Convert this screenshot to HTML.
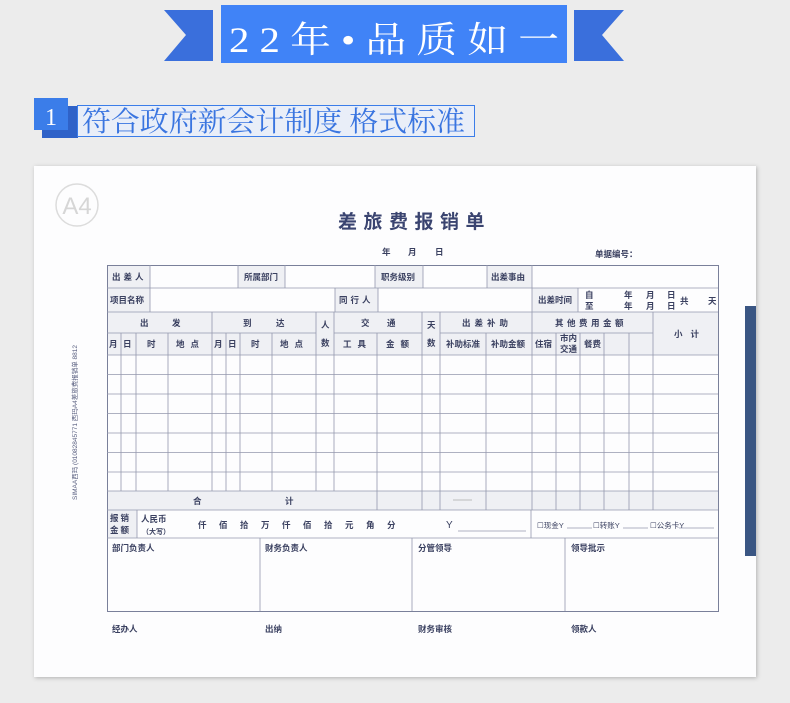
<!DOCTYPE html>
<html><head><meta charset="utf-8"><style>
html,body{margin:0;padding:0;background:#ececec;}
body{width:790px;height:703px;position:relative;overflow:hidden;font-family:"Liberation Sans","Noto Sans CJK SC",sans-serif;}
svg text{font-family:"Liberation Sans","Noto Sans CJK SC",sans-serif;}
</style></head><body>
<svg width="790" height="703" viewBox="0 0 790 703" xmlns="http://www.w3.org/2000/svg" style="position:absolute;left:0;top:0">
<defs>
<filter id="sh" x="-5%" y="-5%" width="110%" height="110%"><feDropShadow dx="1" dy="1" stdDeviation="2" flood-color="#000" flood-opacity="0.25"/></filter>
</defs>
<polygon points="164,10 213,10 213,61 164,61 186,35" fill="#3a6fdc"/>
<polygon points="624,10 574,10 574,61 624,61 602,35" fill="#3a6fdc"/>
<rect x="221" y="5" width="346" height="58" fill="#4083f7"/>
<text x="229" y="52" textLength="330" lengthAdjust="spacingAndGlyphs" fill="#fff" font-size="36" style="font-family:'Liberation Serif','Noto Serif CJK SC',serif">2 2 年 • 品 质 如 一</text>
<rect x="42" y="106" width="36" height="32" fill="#2f62c8"/>
<rect x="34" y="98" width="34" height="32" fill="#3b7de9"/>
<text x="51" y="125" text-anchor="middle" fill="#fff" font-size="24" style="font-family:'Liberation Serif',serif">1</text>
<rect x="77.5" y="105.5" width="397" height="31" fill="#e9eef8" stroke="#3b7de9" stroke-width="1"/>
<text x="82" y="131" textLength="383" lengthAdjust="spacingAndGlyphs" fill="#3a75e0" font-size="28" style="font-family:'Liberation Serif','Noto Serif CJK SC',serif">符合政府新会计制度 格式标准</text>
<rect x="34" y="166" width="722" height="511" fill="#fdfdfe" filter="url(#sh)"/>
<rect x="745" y="306" width="11" height="250" fill="#3a5683"/>
<circle cx="77" cy="205" r="21" fill="none" stroke="#dcdcdc" stroke-width="1.5"/>
<text x="77" y="214" text-anchor="middle" fill="#d6d6d6" font-size="24">A4</text>
<text x="338" y="228" letter-spacing="6.5" fill="#3a4470" font-size="19" font-weight="bold">差旅费报销单</text>
<g fill="#3a4060" font-size="8.5" font-weight="bold">
<text x="382" y="255">年</text><text x="408" y="255">月</text><text x="435" y="255">日</text>
<text x="595" y="257">单据编号：</text>
</g>
<text transform="translate(77,500) rotate(-90)" fill="#5a6080" font-size="6.5">SIMAA西玛   (01082845771   西玛A4差旅费报销单  8812</text>
<g fill="#eff0f4">
<rect x="107" y="265" width="43" height="23"/><rect x="238" y="265" width="47" height="23"/><rect x="375" y="265" width="48" height="23"/><rect x="487" y="265" width="45" height="23"/>
<rect x="107" y="288" width="43" height="24"/><rect x="335" y="288" width="43" height="24"/><rect x="532" y="288" width="46" height="24"/>
<rect x="107" y="312" width="611" height="43"/>
<rect x="107" y="491" width="611" height="19"/>
<rect x="107" y="510" width="30" height="28"/>
</g>
<g stroke="#9498ad" stroke-width="0.8" fill="none">
<rect x="107.5" y="265.5" width="611" height="346" stroke="#7a809a" stroke-width="1"/>
<path d="M107 288H718M107 312H718M107 333H316M334 333H422M440 333H653M107 355H718M107 374.5H718M107 394H718M107 413.5H718M107 433H718M107 452.5H718M107 472H718M107 491H718M107 510H718M107 538H718"/>
<path d="M150 265V312M238 265V288M285 265V288M375 265V288M423 265V288M487 265V288M532 265V312M335 288V312M378 288V312M578 288V312"/>
<path d="M121 333V491M136 333V491M168 333V491M212 312V491M226 333V491M240 333V491M272 333V491M316 312V491M334 312V491M377 333V510M422 312V510M440 312V510M486 333V510M532 312V510M556 333V510M580 333V510M604 333V510M629 333V510M653 312V510"/>
<path d="M137 510V538M531 510V538"/>
<path d="M260 538V611M412 538V611M565 538V611"/>
<path d="M453 500H472" stroke="#aaa"/>
<path d="M458 531H526M567 528H592M623 528H648M679 528H714"/>
</g>
<g fill="#3a4060" font-size="8.5" font-weight="bold">
<text x="112" y="280" letter-spacing="3">出差人</text><text x="244" y="280">所属部门</text><text x="381" y="280">职务级别</text><text x="491" y="280">出差事由</text>
<text x="110" y="303">项目名称</text><text x="339" y="303" letter-spacing="3">同行人</text><text x="538" y="303">出差时间</text>
<text x="585" y="298">自</text><text x="585" y="309">至</text><text x="624" y="298">年</text><text x="624" y="309">年</text><text x="646" y="298">月</text><text x="646" y="309">月</text><text x="667" y="298">日</text><text x="667" y="309">日</text><text x="680" y="304">共</text><text x="708" y="304">天</text>
<text x="140" y="326">出</text><text x="172" y="326">发</text><text x="243" y="326">到</text><text x="276" y="326">达</text>
<text x="321" y="328">人</text><text x="321" y="346">数</text><text x="427" y="328">天</text><text x="427" y="346">数</text>
<text x="361" y="326">交</text><text x="387" y="326">通</text>
<text x="462" y="326" letter-spacing="4">出差补助</text><text x="555" y="326" letter-spacing="3.5">其他费用金额</text>
<text x="674" y="337" letter-spacing="8">小计</text>
<text x="109" y="347">月</text><text x="123" y="347">日</text><text x="147" y="347">时</text><text x="176" y="347" letter-spacing="6">地点</text>
<text x="214" y="347">月</text><text x="228" y="347">日</text><text x="251" y="347">时</text><text x="280" y="347" letter-spacing="6">地点</text>
<text x="343" y="347" letter-spacing="6">工具</text><text x="386" y="347" letter-spacing="6">金额</text>
<text x="446" y="347">补助标准</text><text x="491" y="347">补助金额</text><text x="535" y="347">住宿</text>
<text x="560" y="341">市内</text><text x="560" y="352">交通</text><text x="584" y="347">餐费</text>
<text x="193" y="504">合</text><text x="285" y="504">计</text>
<text x="110" y="521" letter-spacing="2">报销</text><text x="110" y="533" letter-spacing="2">金额</text>
<text x="141" y="522">人民币</text><text x="142" y="534" font-size="7">（大写）</text>
<text x="198" y="528" letter-spacing="12.5">仟佰拾万仟佰拾元角分</text><text x="446" y="528" font-weight="normal" font-size="10">Y</text>
<text x="537" y="528" font-size="7.5" font-weight="normal">☐现金Y</text><text x="593" y="528" font-size="7.5" font-weight="normal">☐转账Y</text><text x="650" y="528" font-size="7.5" font-weight="normal">☐公务卡Y</text>
<text x="112" y="551">部门负责人</text><text x="265" y="551">财务负责人</text><text x="418" y="551">分管领导</text><text x="571" y="551">领导批示</text>
<text x="112" y="632">经办人</text><text x="265" y="632">出纳</text><text x="418" y="632">财务审核</text><text x="571" y="632">领款人</text>
</g>
</svg>
</body></html>
